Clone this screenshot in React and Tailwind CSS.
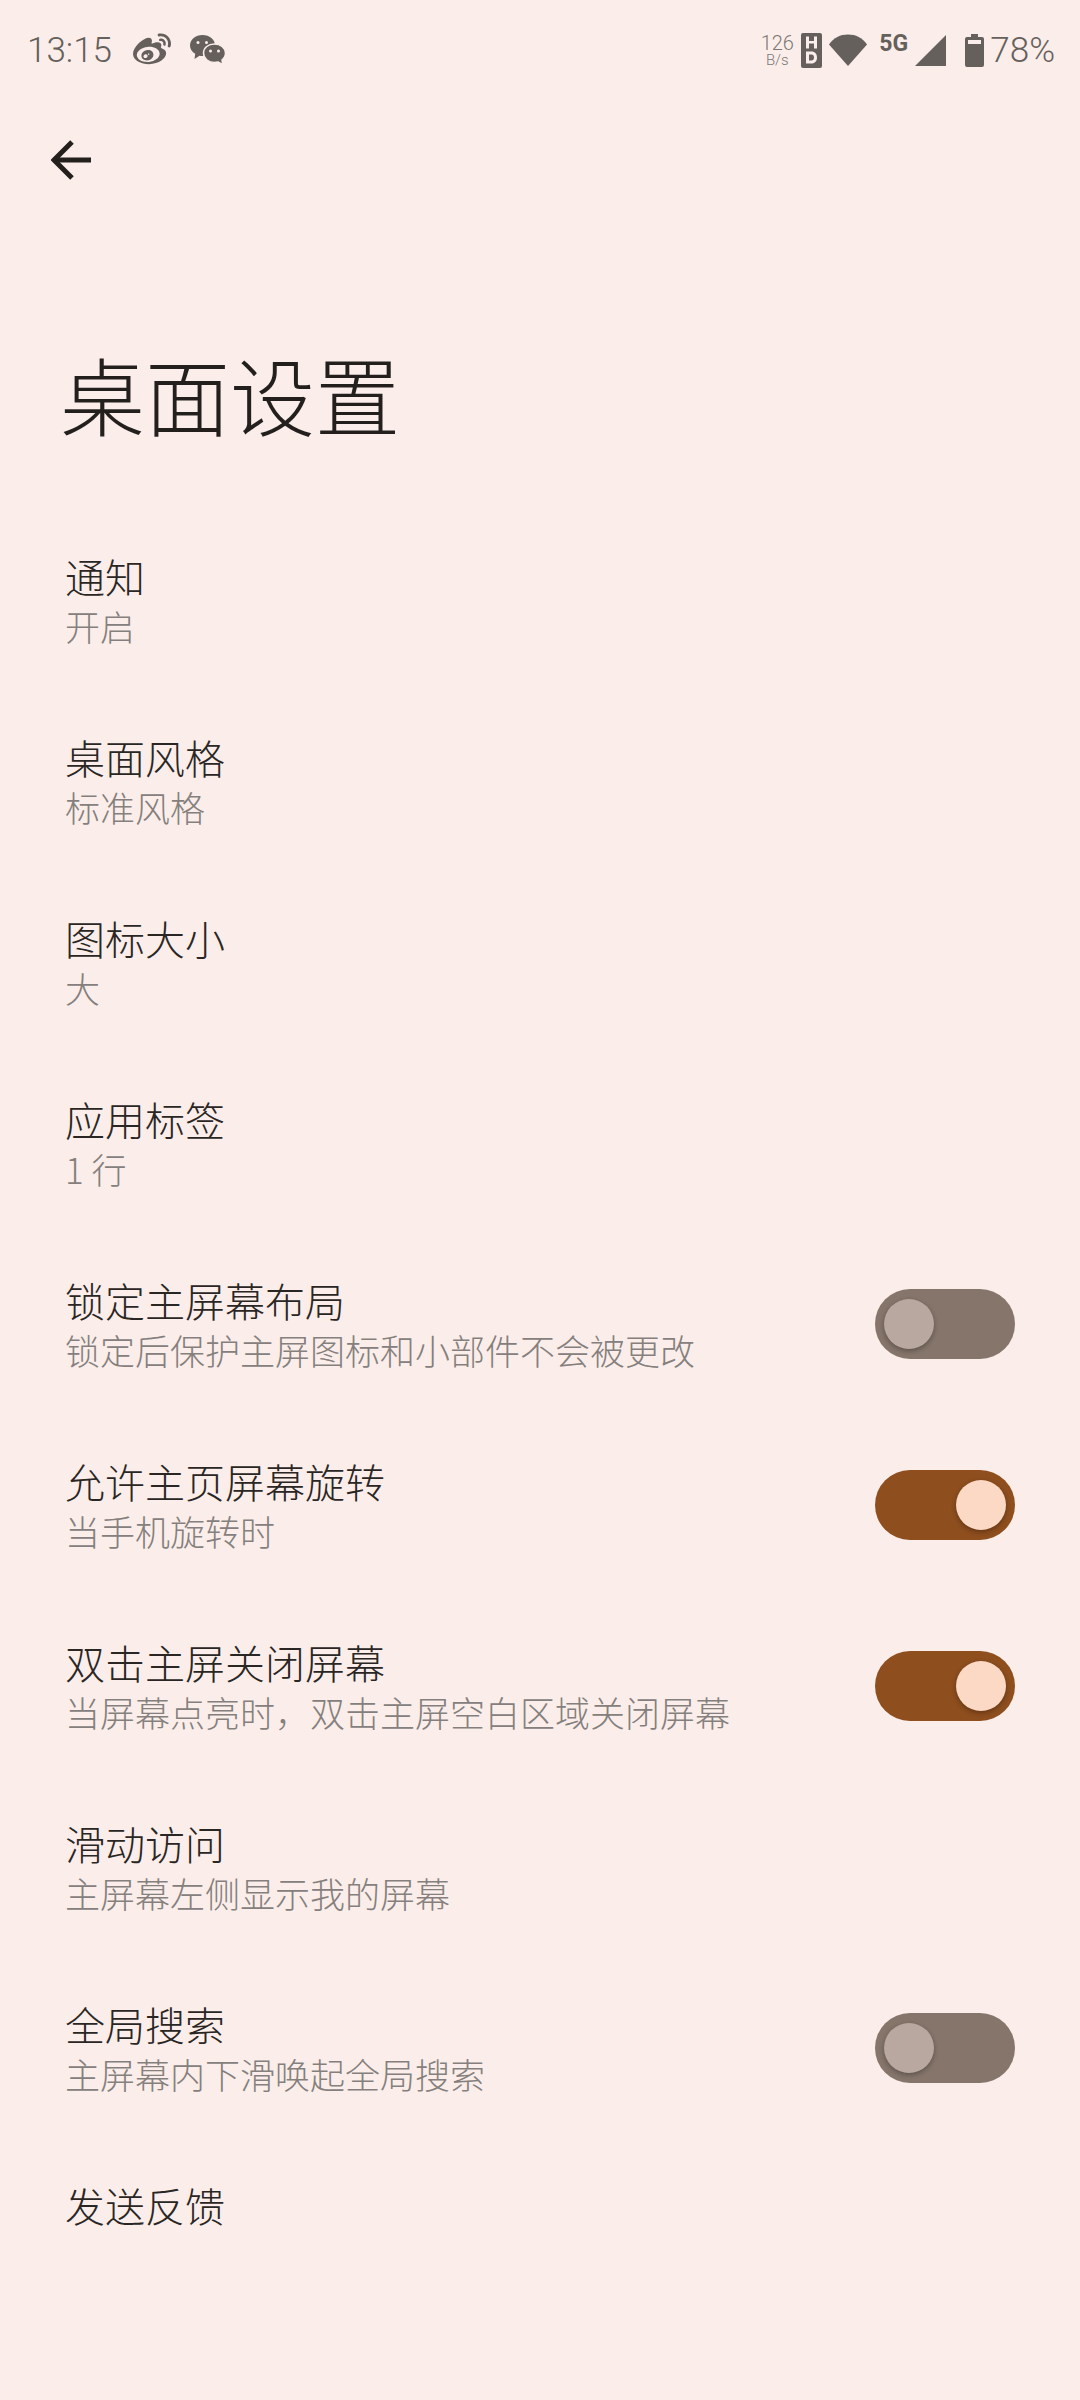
import React from 'react';
import { FaWeibo } from 'react-icons/fa';

const cjk = "font-['Noto_Sans_CJK_SC','Noto_Sans_CJK_JP',sans-serif]";

const rows = [
    { title: '通知', sub: '开启' },
    { title: '桌面风格', sub: '标准风格' },
    { title: '图标大小', sub: '大' },
    { title: '应用标签', sub: '1 行' },
    { title: '锁定主屏幕布局', sub: '锁定后保护主屏图标和小部件不会被更改', toggle: 'off' },
    { title: '允许主页屏幕旋转', sub: '当手机旋转时', toggle: 'on' },
    { title: '双击主屏关闭屏幕', sub: '当屏幕点亮时，双击主屏空白区域关闭屏幕', toggle: 'on' },
    { title: '滑动访问', sub: '主屏幕左侧显示我的屏幕' },
    { title: '全局搜索', sub: '主屏幕内下滑唤起全局搜索', toggle: 'off' },
    { title: '发送反馈' },
];

function Toggle({ on }) {
    return (
        <div className={`flex h-[70px] w-[140px] shrink-0 items-center rounded-full ${on ? 'justify-end bg-[#8e4e1e] pr-[9px]' : 'bg-[#85756b] pl-[9px]'}`}>
            <div className={`h-[50px] w-[50px] rounded-full shadow-[0_2px_5px_rgba(0,0,0,0.3)] ${on ? 'bg-[#fbd9c4]' : 'bg-[#b9a8a0]'}`} />
        </div>
    );
}

function Row({ title, sub, toggle }) {
    return (
        <div className="flex h-[181px] items-center justify-between pl-[65px] pr-[65px]">
            <div className="flex h-full flex-col pt-[40px]">
                <div className={`${cjk} h-[54px] text-[40px] leading-[54px] font-light text-[#2a2624]`}>{title}</div>
                {sub && <div className={`${cjk} h-[46px] text-[35px] leading-[46px] font-light text-[#85807d]`}>{sub}</div>}
            </div>
            {toggle && <Toggle on={toggle === 'on'} />}
        </div>
    );
}

function WechatIcon() {
    return (
        <svg width="36" height="31" viewBox="0 0 36 31" className="ml-[19px]">
            <path d="M12.500 0C19.500 0 25 4.500 25 10.500S19.500 21 12.500 21c-1 0-2-.1-3-.3L4.500 24l.7-5.200C2 16.800 0 13.900 0 10.500 0 4.500 5.500 0 12.500 0z" fill="#65605c" />
            <path d="M24.500 9C30.800 9 35.500 13 35.500 18c0 2.800-1.300 5.200-3.500 7l.8 4.700-4.600-2.700c-1.200.3-2.400.5-3.700.5-6.200 0-11-4.200-11-9.500S18.300 9 24.500 9z" fill="#65605c" stroke="#fbeeea" strokeWidth="1.500" />
            <circle cx="8" cy="7.500" r="1.500" fill="#fbeeea" />
            <circle cx="16.500" cy="7.500" r="1.500" fill="#fbeeea" />
            <circle cx="20.500" cy="16" r="1.500" fill="#fbeeea" />
            <circle cx="28.500" cy="16" r="1.500" fill="#fbeeea" />
        </svg>
    );
}

function StatusBar() {
    return (
        <div className="flex h-[100px] items-center justify-between pl-[27px] pr-[25px] text-[#65605c]">
            <div className="flex items-center">
                <span className="font-['Roboto',sans-serif] text-[35px] leading-none font-light">13:15</span>
                <FaWeibo className="ml-[21px] h-[38px] w-[38px]" />
                <WechatIcon />
            </div>
            <div className="flex items-center">
                <div className="flex w-[32px] flex-col items-center font-['Roboto',sans-serif] leading-none font-light text-[#7d7874]">
                    <span className="text-[20px] leading-[20px]">126</span>
                    <span className="text-[15px] leading-[14px]">B/s</span>
                </div>
                <svg width="21" height="35" viewBox="0 0 21 35" className="ml-[8px]">
                    <rect width="21" height="35" rx="2" fill="#65605c" />
                    <path d="M5 3.500h3v4.500h5V3.500h3v12h-3v-5H8v5H5z" fill="#fbeeea" />
                    <path d="M5 18.500h5.500c3.500 0 5.500 2.500 5.500 6s-2 6-5.500 6H5z M8 21.500v6h2.500c1.600 0 2.500-1.200 2.500-3s-.9-3-2.500-3z" fill="#fbeeea" fillRule="evenodd" />
                </svg>
                <svg width="38" height="32" viewBox="0 0 38 32" className="ml-[7px]">
                    <path d="M0 10.500C5 3.500 11 0.500 19 0.500S33 3.500 38 10.500L19 32z" fill="#65605c" />
                </svg>
                <div className="mb-[14px] ml-[12px] w-[28px] font-['Roboto',sans-serif] text-[23px] leading-none font-bold">5G</div>
                <svg width="31" height="31" viewBox="0 0 31 31" className="ml-[8px]">
                    <path d="M31 0v31H0z" fill="#65605c" />
                </svg>
                <svg width="19" height="33" viewBox="0 0 19 33" className="ml-[19px]">
                    <path d="M6 0h7v3h4a2 2 0 0 1 2 2v26a2 2 0 0 1-2 2H2a2 2 0 0 1-2-2V5a2 2 0 0 1 2-2h4z" fill="#65605c" />
                    <rect x="3" y="6" width="13" height="4" fill="#fbeeea" />
                </svg>
                <span className="ml-[6px] font-['Roboto',sans-serif] text-[35px] leading-none font-light">78%</span>
            </div>
        </div>
    );
}

export default function App() {
    return (
        <div className="h-[2400px] w-[1080px] overflow-hidden bg-[#fbeeea]">
            <StatusBar />
            <div className="h-[120px] pl-[51px] pt-[40px]">
                <svg width="40" height="40" viewBox="0 0 40 40" fill="none" stroke="#221f1d" strokeWidth="5">
                    <path d="M40 20H3" />
                    <path d="M21 2L3 20l18 18" />
                </svg>
            </div>
            <h1 className={`${cjk} h-[289px] pl-[60px] pt-[113px] text-[85px] leading-[120px] font-light text-[#221f1d]`}>桌面设置</h1>
            {rows.map((row) => (
                <Row key={row.title} {...row} />
            ))}
        </div>
    );
}
